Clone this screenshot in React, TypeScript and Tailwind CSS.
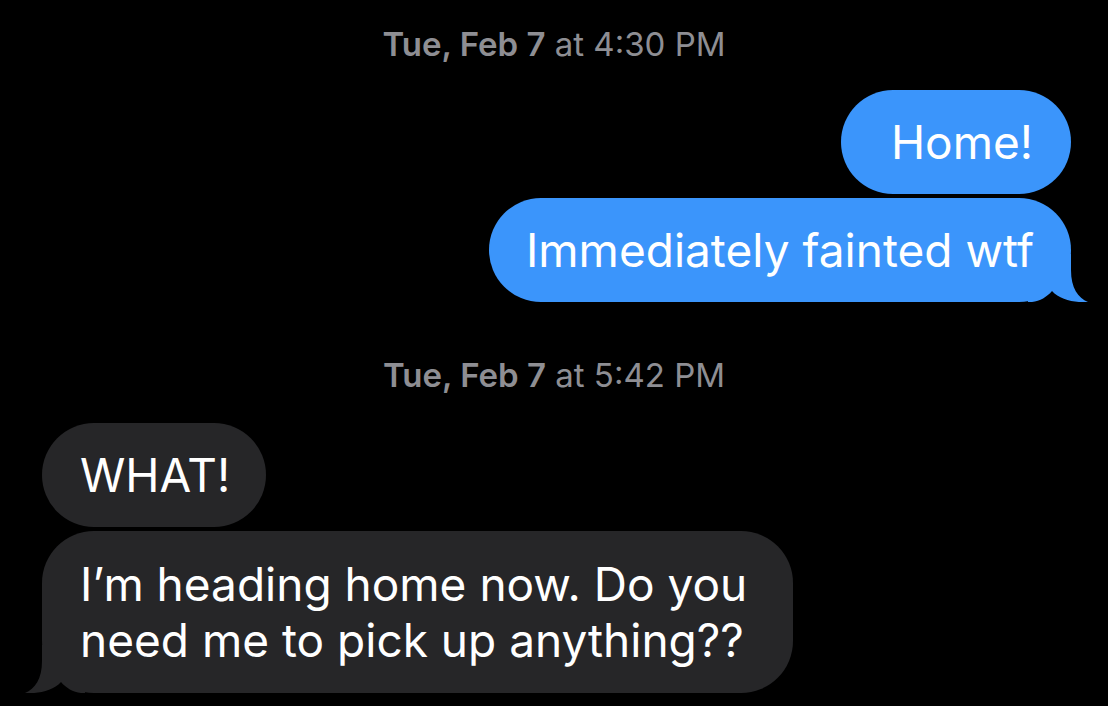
import React from "react";

function Tail({ color, side }: { color: string; side: "left" | "right" }) {
  return (
    <svg
      width="60"
      height="48"
      viewBox="0 0 60 48"
      className={
        side === "right"
          ? "absolute bottom-0 -right-[17px]"
          : "absolute bottom-0 -left-[17px] -scale-x-100"
      }
    >
      <path
        d="M43 0 L43 16 C43 34 50 44 60 48 C48 49 32 46 24 37 C19 43 12 47 4 48 L0 48 L0 0 Z"
        fill={color}
      />
    </svg>
  );
}

function Stamp({ day, time, className }: { day: string; time: string; className: string }) {
  return (
    <div className={"text-center text-[33px] leading-[36px] text-[#8e8e93] " + className}>
      <span className="font-semibold">{day}</span> at {time}
    </div>
  );
}

export default function App() {
  const blue = "#3b95fb";
  const gray = "#262628";
  return (
    <div className="w-[1108px] h-[706px] bg-black overflow-hidden font-['Inter',sans-serif] text-white">
      <Stamp day="Tue, Feb 7" time="4:30 PM" className="pt-[26px]" />

      <div className="flex flex-col items-end pr-[37px] mt-[28px] gap-[4px]">
        <div className="relative rounded-[52px] bg-[#3b95fb] pl-[50px] pr-[38px] py-[24px] text-[46px] leading-[56px]">
          <span className="relative">Home!</span>
        </div>
        <div className="relative rounded-[52px] bg-[#3b95fb] px-[37px] py-[24px] text-[46px] leading-[56px]">
          <Tail color={blue} side="right" />
          <span className="relative">Immediately fainted wtf</span>
        </div>
      </div>

      <Stamp day="Tue, Feb 7" time="5:42 PM" className="mt-[55px]" />

      <div className="flex flex-col items-start pl-[42px] mt-[30px] gap-[4px]">
        <div className="relative rounded-[52px] bg-[#262628] pl-[38px] pr-[36px] py-[24px] text-[46px] leading-[56px]">
          <span className="relative">WHAT!</span>
        </div>
        <div className="relative rounded-[52px] bg-[#262628] pl-[38px] pr-[46px] py-[25px] text-[46px] leading-[56px]">
          <Tail color={gray} side="left" />
          <span className="relative">
            I’m heading home now. Do you
            <br />
            need me to pick up anything??
          </span>
        </div>
      </div>
    </div>
  );
}
